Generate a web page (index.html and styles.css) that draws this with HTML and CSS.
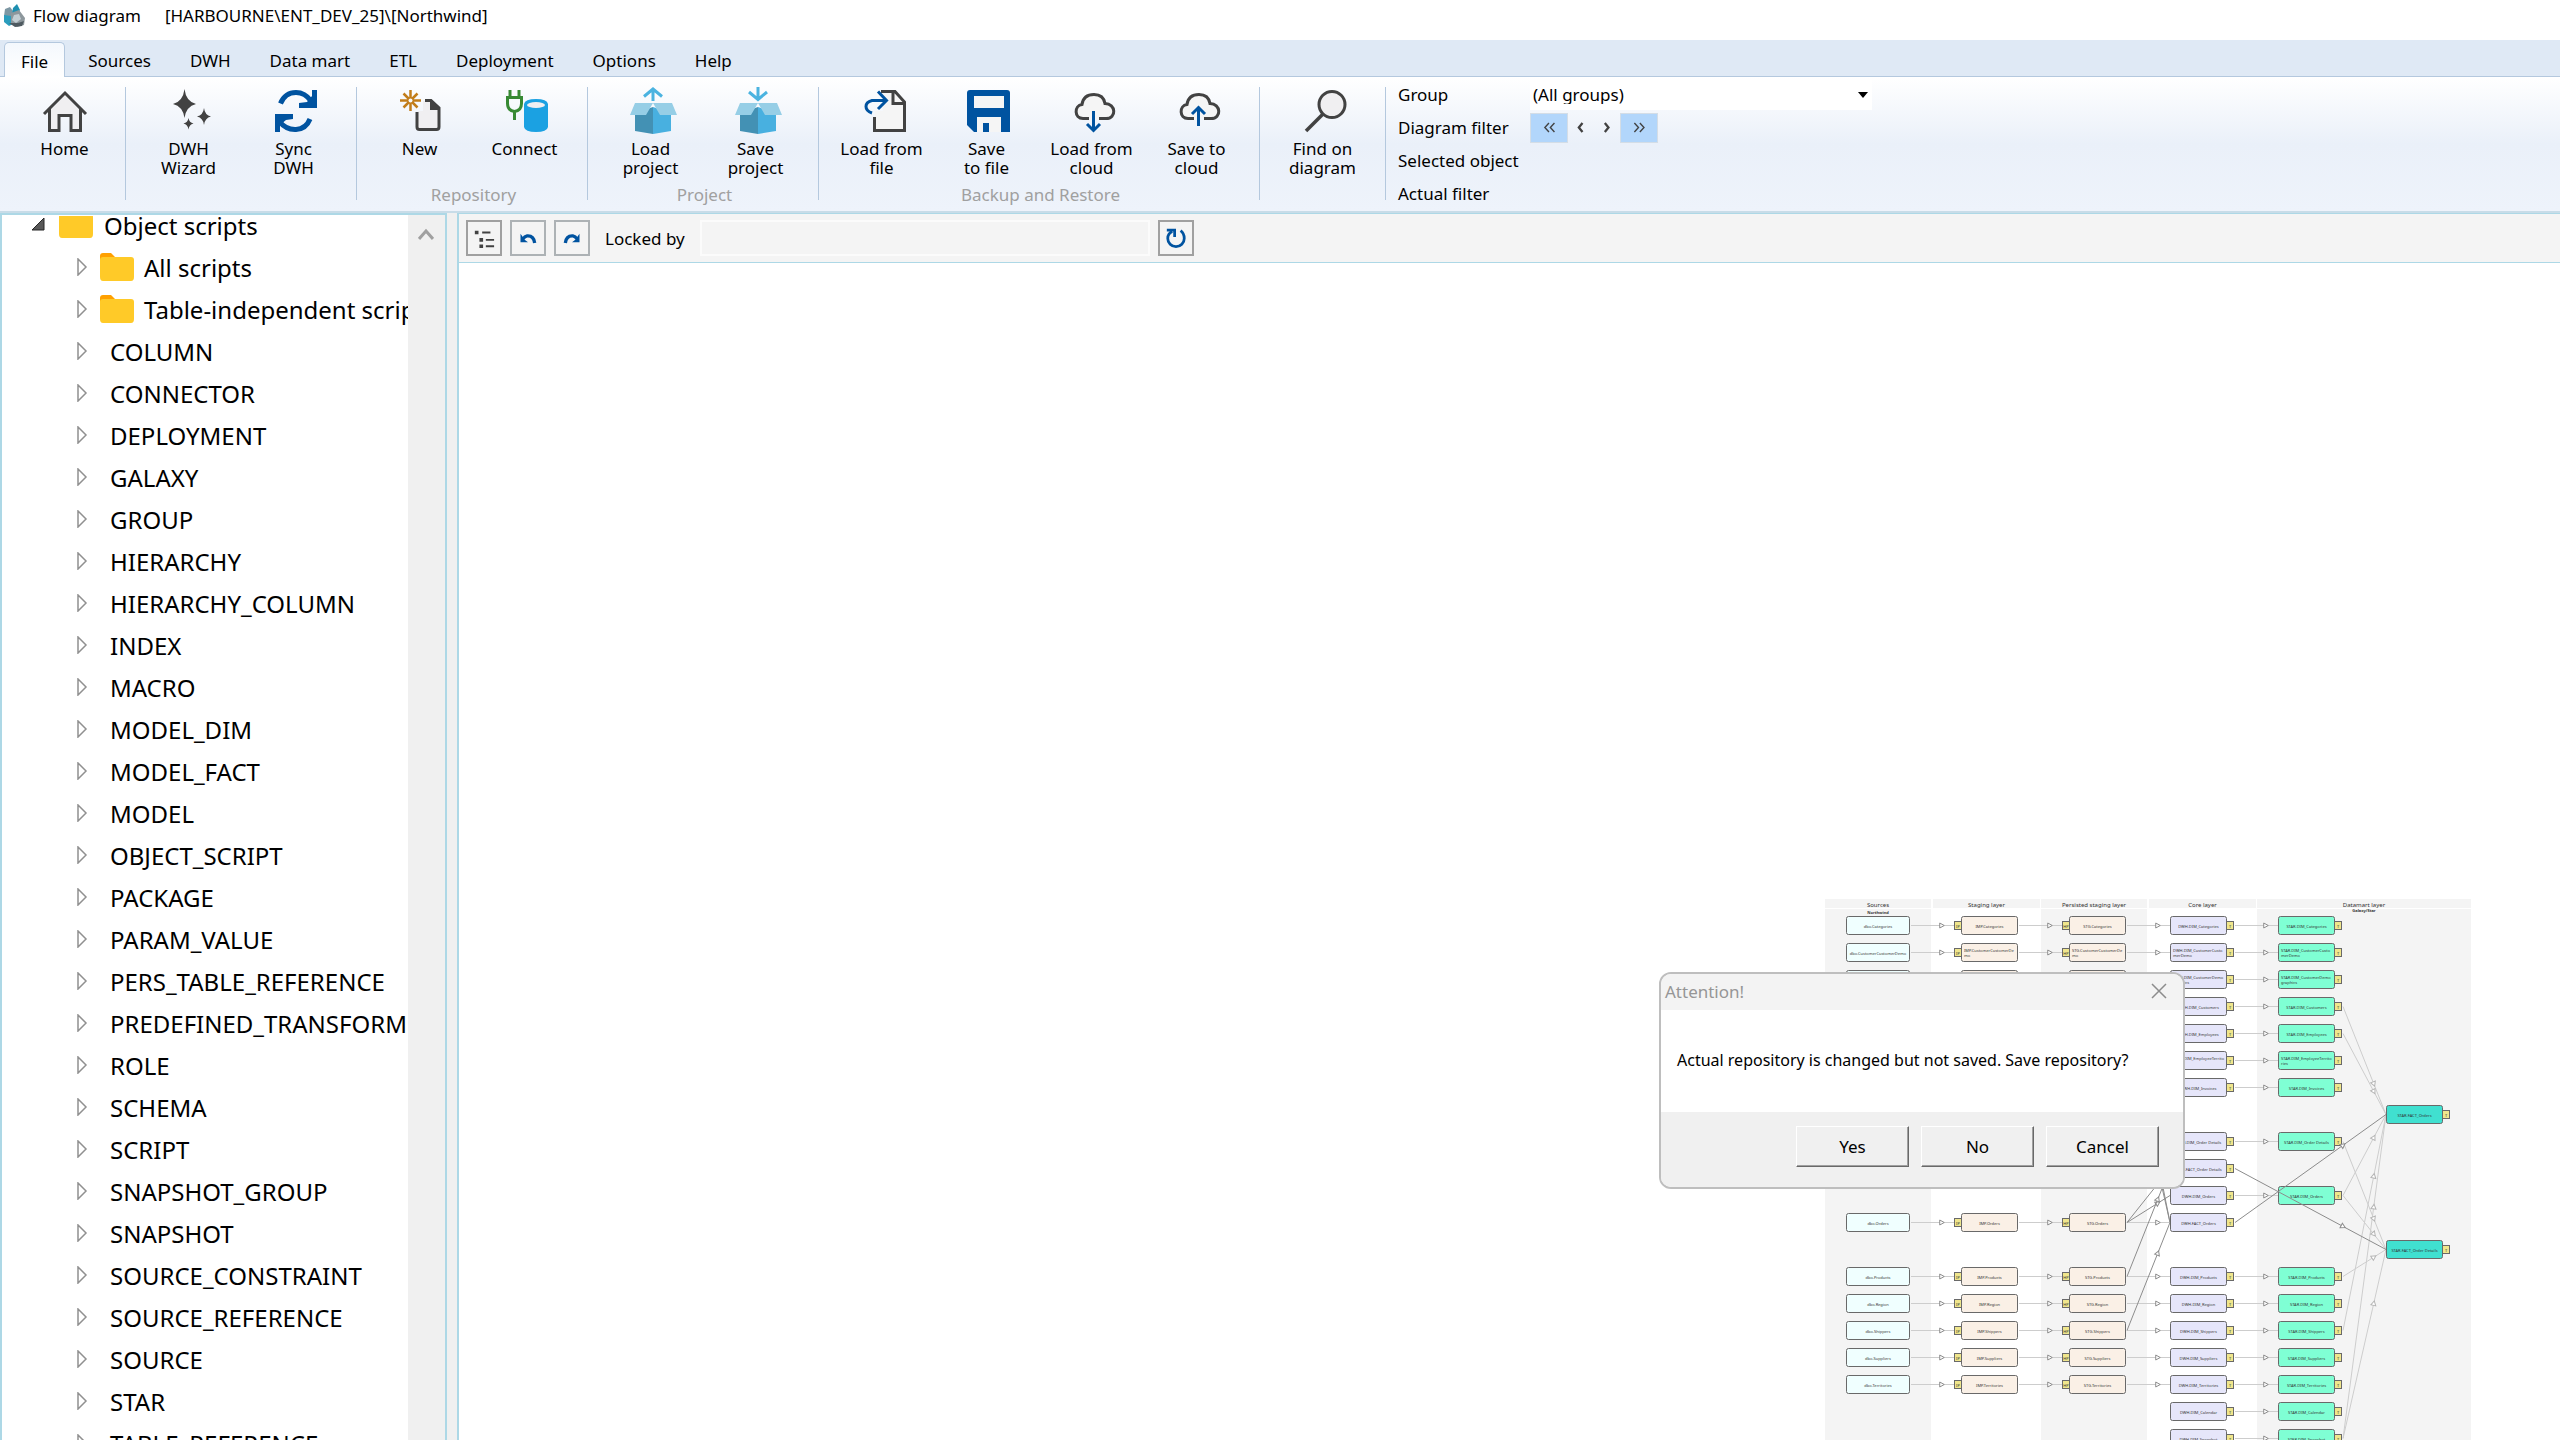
FILE: index.html
```html
<!DOCTYPE html>
<html lang="en">
<head>
<meta charset="utf-8">
<title>Flow diagram</title>
<link rel="stylesheet" href="styles.css">
</head>
<body>
<header class="titlebar">
  <svg class="app-icon" viewBox="0 0 24 24" aria-hidden="true">
    <path d="M3 6l5-2 3 4-2 6-7-1z" fill="#7d97a3"/>
    <path d="M11 5l4-4 3 6-3 5-5-1z" fill="#1d8fb0"/>
    <path d="M2 12l7 1 2 8-4 2-5-4z" fill="#2b9dbd"/>
    <path d="M9 10l8-3 6 8-1 7-7 2-6-4z" fill="#8d979c"/>
    <path d="M12 12l5-1 2 5-5 4-4-3z" fill="#c3ced3"/>
    <path d="M7 20l9 0 6-2-2 5-7 1z" fill="#4f5a60"/>
  </svg>
  <span>Flow diagram</span>
  <span class="db-path">[HARBOURNE\ENT_DEV_25]\[Northwind]</span>
</header>

<nav class="tabs">
  <button class="tab active">File</button>
  <button class="tab">Sources</button>
  <button class="tab">DWH</button>
  <button class="tab">Data mart</button>
  <button class="tab">ETL</button>
  <button class="tab">Deployment</button>
  <button class="tab">Options</button>
  <button class="tab">Help</button>
</nav>

<section class="ribbon">
  <div class="group home">
    <div class="tools">
      <button class="tool"><svg viewBox="0 0 48 48"><path d="M8 25v19h10V29h12v15h10V25L24 8z" fill="#f0eff1"/><path d="M3 27L24 6l21 21M8.500 22v21.500h9.500V28.500h12v15h9.500V22" fill="none" stroke="#424242" stroke-width="3"/></svg>Home</button>
    </div>
  </div>
  <div class="group">
    <div class="tools">
      <button class="tool"><svg viewBox="0 0 48 48" fill="#424242"><path d="M19.500 2q1.500 12.500 11.500 15q-10 2.500-11.500 14q-1.500-11.500-11.500-14q10-2.500 11.500-15zM39 21q.8 7 7 8.500q-6.200 1.500-7 8.500q-.8-7-7-8.500q6.200-1.500 7-8.500zM23.500 31q.7 4.500 5 5.500q-4.300 1-5 6q-.7-5-5-6q4.300-1 5-5.500z"/></svg>DWH<br>Wizard</button>
      <button class="tool"><svg viewBox="0 0 48 48"><path d="M10.500 16.500Q15 5.500 26 5.500Q35 5.500 41 14M9 34Q16 43 26 42.500Q36 42 40 32" fill="none" stroke="#0053a0" stroke-width="5"/><path d="M47 3v18H29v-5l8-1 5-6V3zM5 45V27h18v5l-7 1-6 5v7z" fill="#0053a0"/></svg>Sync<br>DWH</button>
    </div>
  </div>
  <div class="group">
    <div class="tools">
      <button class="tool"><svg viewBox="0 0 48 48"><path d="M22 24h5V14h9l7 7v20H22z" fill="#f0eff1"/><path d="M14.500 3v21M4 13.500h21M7.500 6.500l14 14M21.500 6.500l-14 14" stroke="#c27d1a" stroke-width="2.500"/><circle cx="14.500" cy="13.500" r="2" fill="#f7f9fc"/><path d="M21 25v15q0 2.500 2.500 2.500h17q2.500 0 2.500-2.500V21L35 13.500h-6" fill="none" stroke="#424242" stroke-width="3"/><path d="M34 12l10 9v2H34z" fill="#424242"/></svg>New</button>
      <button class="tool"><svg viewBox="0 0 48 48"><path d="M9 3v8M18 3v8M5 10.500h17M6.500 10.500v6q0 7 7 8q7-1 7-8v-6M13.500 24v9" fill="none" stroke="#388a34" stroke-width="3"/><path d="M23 17q1-5 12-5t12 5v23q-1 5-12 5t-12-5z" fill="#1ba1e2"/><ellipse cx="35" cy="18" rx="9" ry="3" fill="#f0eff1"/></svg>Connect</button>
    </div>
    <span class="group-name">Repository</span>
  </div>
  <div class="group">
    <div class="tools">
      <button class="tool"><svg viewBox="0 0 48 48"><path d="M26 14V2M17 9.500L26 2l9 7.500" fill="none" stroke="#4ab3e0" stroke-width="3"/><path d="M8 26l18-6v27L8 44z" fill="#4391b4"/><path d="M44 26l-18-6v27l18-3z" fill="#48b0e0"/><path d="M8 16h18l-7 12H3zM26 16h19l5 12H33z" fill="#96cee6"/></svg>Load<br>project</button>
      <button class="tool"><svg viewBox="0 0 48 48"><path d="M26 0v12M17 5l9 7.500L35 5" fill="none" stroke="#4ab3e0" stroke-width="3"/><path d="M8 26l18-6v27L8 44z" fill="#4391b4"/><path d="M44 26l-18-6v27l18-3z" fill="#48b0e0"/><path d="M8 16h18l-7 12H3zM26 16h19l5 12H33z" fill="#96cee6"/></svg>Save<br>project</button>
    </div>
    <span class="group-name">Project</span>
  </div>
  <div class="group">
    <div class="tools">
      <button class="tool"><svg viewBox="0 0 48 48"><path d="M24 4h13l10 11v29H17V24h8z" fill="#f5f5f5"/><path d="M23 4.500h14L46.500 15v28.500h-30V30M35 4v12.500h11" fill="none" stroke="#424242" stroke-width="3"/><path d="M14 26q-6-2-6-6.500t6-6h13M20 4.500l8.500 9L20 22" fill="none" stroke="#0053a0" stroke-width="3"/></svg>Load from<br>file</button>
      <button class="tool"><svg viewBox="0 0 48 48"><path d="M4 6q0-3 3-3h37q3 0 3 3v39H11l-7-7z" fill="#0053a0"/><path d="M11 9h30v12H11zM14 30h24v15H26v-9h-6v9h-6z" fill="#f5f5f5"/></svg>Save<br>to file</button>
      <button class="tool"><svg viewBox="0 0 48 48"><path d="M21 31.500h-6c-9 0-9-13-1-14c1-7 5-10 12-10c6 0 10 3 11 9c11 0 12 15 1 15h-7" fill="#f5f5f5" stroke="#424242" stroke-width="3"/><path d="M25.500 24v18M19 37l6.500 6.500L32 37" fill="none" stroke="#0053a0" stroke-width="3"/></svg>Load from<br>cloud</button>
      <button class="tool"><svg viewBox="0 0 48 48"><path d="M21 31.500h-6c-9 0-9-13-1-14c1-7 5-10 12-10c6 0 10 3 11 9c11 0 12 15 1 15h-7" fill="#f5f5f5" stroke="#424242" stroke-width="3"/><path d="M25.500 39V21M19 27l6.500-6.500L32 27" fill="none" stroke="#0053a0" stroke-width="3"/></svg>Save to<br>cloud</button>
    </div>
    <span class="group-name">Backup and Restore</span>
  </div>
  <div class="group">
    <div class="tools">
      <button class="tool"><svg viewBox="0 0 48 48"><circle cx="33" cy="17.500" r="13" fill="#f0eff1" stroke="#424242" stroke-width="3"/><path d="M24 27L7 44" stroke="#424242" stroke-width="3.500"/></svg>Find on<br>diagram</button>
    </div>
  </div>
  <div class="filters">
    <label for="group">Group</label>
    <div class="select-wrap">
      <select id="group"><option>(All groups)</option></select>
      <svg viewBox="0 0 10 6" aria-hidden="true"><path d="M0 0h10L5 6z" fill="#000"/></svg>
    </div>
    <span>Diagram filter</span>
    <div class="pager">
      <button class="wide" aria-label="First"><svg viewBox="0 0 14 12"><path d="M6.500 1L2 6l4.500 5M12.500 1L8 6l4.500 5"/></svg></button>
      <button class="step bold" aria-label="Previous"><svg viewBox="0 0 8 12"><path d="M6 1L2 6l4 5"/></svg></button>
      <button class="step bold" aria-label="Next"><svg viewBox="0 0 8 12"><path d="M2 1l4 5-4 5"/></svg></button>
      <button class="wide" aria-label="Last"><svg viewBox="0 0 14 12"><path d="M1.500 1L6 6l-4.500 5M7.500 1L12 6l-4.500 5"/></svg></button>
    </div>
    <span>Selected object</span><span></span>
    <span>Actual filter</span><span></span>
  </div>
</section>

<main class="workspace">
  <aside class="explorer">
    <ul class="tree" id="tree"></ul>
    <div class="scrollbar"><svg viewBox="0 0 16 12" aria-hidden="true"><path d="M1 11l7-8 7 8" fill="none" stroke="#a0a0a0" stroke-width="3"/></svg></div>
  </aside>
  <section class="editor">
    <div class="toolbar">
      <button class="icon-btn dark" aria-label="Outline"><svg viewBox="0 0 24 24"><path d="M2 4h4v4H2zM7 12h4v4H7zM7 19h4v4H7z" fill="#424242"/><path d="M10 6h9M14 14h9M14 21h9" stroke="#424242" stroke-width="2"/></svg></button>
      <button class="icon-btn small" aria-label="Undo"><svg viewBox="0 0 24 24"><path d="M20 18q-1-9-9-8.500q-3 .5-5 3.500" fill="none" stroke="#0053a0" stroke-width="4"/><path d="M3 7v10h9l-4-3-2-3z" fill="#0053a0"/></svg></button>
      <button class="icon-btn small" aria-label="Redo"><svg viewBox="0 0 24 24"><path d="M4 18q1-9 9-8.500q3 .5 5 3.500" fill="none" stroke="#0053a0" stroke-width="4"/><path d="M21 7v10h-9l4-3 2-3z" fill="#0053a0"/></svg></button>
      <label for="locked">Locked by</label>
      <input id="locked" type="text" readonly>
      <button class="icon-btn dark" aria-label="Refresh"><svg viewBox="0 0 24 24"><path d="M17 4q4 3 4 8.500a9 9 0 0 1-18 0Q3 7 8 5" fill="none" stroke="#0053a0" stroke-width="3"/><path d="M2 2h10v9H9V5H2z" fill="#0053a0"/></svg></button>
    </div>
    <div class="canvas">
      <svg class="diagram" id="diagram" width="648" height="560"></svg>
    </div>
  </section>
</main>

<div class="dialog" role="dialog" aria-labelledby="dialog-title">
  <div class="dialog-head">
    <span id="dialog-title">Attention!</span>
    <button class="close" aria-label="Close"><svg viewBox="0 0 16 16"><path d="M1 1l14 14M15 1L1 15" stroke="#8c8c8c" stroke-width="1.500"/></svg></button>
  </div>
  <p class="dialog-text">Actual repository is changed but not saved. Save repository?</p>
  <div class="dialog-actions">
    <button>Yes</button>
    <button>No</button>
    <button>Cancel</button>
  </div>
</div>
<script src="app.js"></script>
</body>
</html>
```
FILE: styles.css
```css
* { box-sizing: border-box; }
body {
  margin: 0;
  height: 100vh;
  overflow: hidden;
  display: flex;
  flex-direction: column;
  background: #fff;
  color: #000;
  font: 17px/19px "Noto Sans", "Open Sans", sans-serif;
}
button, select, input { font: inherit; color: inherit; }
button { border: 0; padding: 0; background: none; }

.titlebar {
  display: flex;
  align-items: center;
  height: 40px;
  padding: 0 2px 10px;
}
.app-icon { width: 24px; height: 24px; margin-right: 7px; }
.db-path { margin-left: 24px; }

.tabs {
  display: flex;
  height: 37px;
  padding: 2px 4px 0;
  background: #dfe9f5;
  border-bottom: 1px solid #b4c8de;
}
.tab { height: 35px; padding: 2px 20px 0 19px; }
.tab.active {
  padding: 2px 16px 0;
  margin-right: 4px;
  border: 1px solid #b4c8de;
  border-bottom: 0;
  border-radius: 5px 5px 0 0;
  background: linear-gradient(#f4f8fd, #fff);
}

.ribbon {
  display: flex;
  flex: none;
  height: 136px;
  padding: 10px 0 11px;
  background: linear-gradient(#fff, #eaf0f9 50%, #eef3fb);
  border-bottom: 2px solid #c8dce8;
}
.group {
  display: flex;
  flex-direction: column;
  align-items: center;
  justify-content: space-between;
  padding: 0 10px;
  border-right: 1px solid #b4c8de;
}
.group.home { padding: 0 8px 0 12px; }
.tools { display: flex; }
.tool { width: 105px; display: block; text-align: center; }
.tool svg { display: block; width: 48px; height: 48px; margin: 0 auto 4px; overflow: visible; }
.group-name { color: #a0a0a0; margin: 0 0 -4px 3px; }
.filters {
  display: grid;
  grid-template-columns: 132px 342px;
  grid-template-rows: repeat(4, 33px);
  align-items: center;
  align-content: start;
  margin: -9px 0 -8px 12px;
}
.select-wrap { display: flex; align-items: center; height: 30px; background: #fff; padding-right: 4px; }
.select-wrap select { flex: 1; height: 28px; border: 0; padding: 0 3px; background: none; appearance: none; }
.select-wrap svg { width: 10px; height: 6px; }
.pager { display: flex; align-items: center; }
.pager button { height: 30px; display: flex; align-items: center; justify-content: center; }
.pager .wide { width: 38px; background: #b2d6fb; border: 1px solid #d4dde6; }
.pager .step { width: 26px; }
.pager svg { height: 11px; fill: none; stroke: #424242; stroke-width: 1.500; }
.pager .bold svg { stroke-width: 2.500; }

.workspace { flex: 1; min-height: 0; display: flex; gap: 10px; background: #f0f0f0; }
.explorer {
  display: flex;
  flex: none;
  width: 447px;
  border: 2px solid #add8e6;
  border-bottom: 0;
  background: #fff;
  overflow: hidden;
}
.tree {
  flex: 1;
  min-width: 0;
  margin: 1px 0 0;
  padding: 0;
  list-style: none;
  overflow: hidden;
  font-size: 24px;
  line-height: 42px;
}
.tree li { display: flex; align-items: center; height: 42px; padding-left: 74px; white-space: nowrap; }
.tree li.root { height: 31px; padding-left: 29px; align-items: flex-end; }
.tree svg { flex: none; }
.tree .arrow { width: 14px; height: 18px; margin: 0 20px 2px 0; }
.tree .folder { width: 34px; height: 28px; margin: 0 10px 3px -10px; }
.tree .root .arrow { margin: 0 14px 14px 0; }
.tree .root .folder { margin: 0 11px 9px 0; }
.scrollbar { width: 37px; background: #f0f0f0; padding: 13px 10px; }
.scrollbar svg { width: 16px; height: 12px; display: block; }

.editor {
  flex: 1;
  min-width: 0;
  display: flex;
  flex-direction: column;
  border-left: 2px solid #add8e6;
  border-top: 1px solid #add8e6;
  background: #fff;
}
.toolbar {
  display: flex;
  align-items: center;
  gap: 8px;
  height: 49px;
  padding-left: 7px;
  background: #f4f4f4;
  border-bottom: 1px solid #add8e6;
}
.icon-btn {
  width: 36px;
  height: 36px;
  border: 2px solid #adb2b5;
  display: flex;
  align-items: center;
  justify-content: center;
}
.icon-btn.dark { border-color: #a0a0a0; }
.icon-btn svg { width: 22px; height: 22px; }
.icon-btn.small svg { width: 20px; height: 20px; }
.toolbar label { margin: 0 7px; }
.toolbar input { width: 450px; height: 36px; border: 2px solid #fbfbfb; background: #f4f4f4; }

.canvas { position: relative; flex: 1; overflow: hidden; }
.diagram { position: absolute; left: 1366px; top: 636px; font-size: 4px; fill: #333; }
.diagram .heading { font-size: 6px; text-anchor: middle; }
.diagram .subheading { font-weight: bold; text-anchor: middle; }
.diagram .centered { text-anchor: middle; }
.diagram .link { stroke: #cdcdcd; }
.diagram .link.strong { stroke: #8c8c8c; }
.diagram .tip { fill: #fff; stroke: #8c8c8c; stroke-width: 1; }
.diagram .tip.soft { stroke: #b4b4b4; }
.diagram .box { stroke: #696969; }
.diagram .badge { fill: #f0e68c; stroke: #696969; }

.dialog {
  position: absolute;
  left: 1659px;
  top: 972px;
  width: 526px;
  border: 2px solid #bebebe;
  border-radius: 12px;
  background: #fff;
  overflow: hidden;
}
.dialog-head {
  display: flex;
  align-items: center;
  justify-content: space-between;
  height: 36px;
  padding: 0 16px 2px 4px;
  background: #f3f3f3;
  color: #969696;
}
.close, .close svg { display: block; width: 16px; height: 16px; }
.dialog-text { margin: 0; padding: 41px 16px 42px; font-size: 16px; white-space: nowrap; }
.dialog-actions {
  display: flex;
  justify-content: flex-end;
  gap: 12px;
  height: 75px;
  padding: 14px 24px 0 0;
  background: #f0f0f0;
}
.dialog-actions button {
  width: 113px;
  height: 41px;
  background: #f0f0f0;
  border: 1px solid;
  border-color: #fff #696969 #696969 #fff;
  box-shadow: inset -1px -1px #a0a0a0;
}
```
FILE: app.js
```javascript
// Object tree
const folder = '<svg class="folder" viewBox="0 0 34 28"><path d="M0 3q0-3 3-3h8l4 4v6H0z" fill="#ffa000"/><path d="M0 7q0-3 3-3h28q3 0 3 3v17q0 4-3 4H3q-3 0-3-4z" fill="#ffca28"/></svg>';
const closed = '<svg class="arrow" viewBox="0 0 14 18"><path d="M2 1v16l8-8z" fill="#fff" stroke="#909090" stroke-width="1.500"/></svg>';
const opened = '<svg class="arrow" viewBox="0 0 14 14"><path d="M1 13L13 1v12z" fill="#595959" stroke="#262626"/></svg>';
const names = ["COLUMN", "CONNECTOR", "DEPLOYMENT", "GALAXY", "GROUP", "HIERARCHY", "HIERARCHY_COLUMN",
  "INDEX", "MACRO", "MODEL_DIM", "MODEL_FACT", "MODEL", "OBJECT_SCRIPT", "PACKAGE", "PARAM_VALUE",
  "PERS_TABLE_REFERENCE", "PREDEFINED_TRANSFORM", "ROLE", "SCHEMA", "SCRIPT", "SNAPSHOT_GROUP", "SNAPSHOT",
  "SOURCE_CONSTRAINT", "SOURCE_REFERENCE", "SOURCE", "STAR", "TABLE_REFERENCE"];
document.getElementById("tree").innerHTML =
  `<li class="root">${opened}${folder}Object scripts</li>` +
  ["All scripts", "Table-independent scripts"].map(n => `<li>${closed}${folder}${n}</li>`).join("") +
  names.map(n => `<li>${closed}${n}</li>`).join("");

// Flow diagram: one row every 27 units, layers side by side
const ROW = 27, TOP = 17.5, H = 18;
const mid = r => TOP + r * ROW + 9;
let back = "", links = "", boxes = "";

const layers = [
  ["Sources", 0, 106, true], ["Staging layer", 108, 107, false], ["Persisted staging layer", 216, 106, true],
  ["Core layer", 324, 107, false], ["Datamart layer", 432, 214, true]
];
for (const [name, x, w, shaded] of layers) {
  back += `<rect x="${x}" y="0" width="${w}" height="9" fill="#f4f4f4"/>`;
  if (shaded) back += `<rect x="${x}" y="10" width="${w}" height="560" fill="#f4f4f4"/>`;
  back += `<text class="heading" x="${x + w / 2}" y="8">${name}</text>`;
}
back += `<text class="subheading" x="53" y="15">Northwind</text><text class="subheading" x="539" y="13">Galaxy/Star</text>`;

function link(x1, y1, x2, y2, kind, tip) {
  const t = 0.715, x = x1 + (x2 - x1) * t, y = y1 + (y2 - y1) * t;
  const a = Math.atan2(y2 - y1, x2 - x1) * 180 / Math.PI;
  links += `<line class="link ${kind}" x1="${x1}" y1="${y1}" x2="${x2}" y2="${y2}"/>`;
  links += `<path class="tip ${tip}" d="M-2-2.500L2.500 0L-2 2.500z" transform="translate(${x} ${y}) rotate(${a})"/>`;
}
function box(x, w, row, fill, text) {
  const y = TOP + row * ROW, lines = text.split("|");
  boxes += `<rect class="box" x="${x + .5}" y="${y}" width="${w - 1}" height="${H}" rx="2" fill="${fill}"/>`;
  if (lines.length > 1) {
    lines.forEach((l, i) => boxes += `<text x="${x + 3}" y="${y + 8 + i * 5}">${l}</text>`);
  } else {
    boxes += `<text class="centered" x="${x + w / 2}" y="${y + 11}">${text}</text>`;
  }
}
function badge(x, row, text) {
  const y = mid(row) - 4;
  boxes += `<rect class="badge" x="${x + .5}" y="${y}" width="7" height="8"/><text class="centered" x="${x + 4}" y="${y + 6}">${text}</text>`;
}

const staged = [[0, "Categories"], [1, "CustomerCustomerDemo", "CustomerCustomerDe|mo"], [2, ""], [11, "Orders"],
  [13, "Products"], [14, "Region"], [15, "Shippers"], [16, "Suppliers"], [17, "Territories"]];
for (const [r, name, wrapped] of staged) {
  const y = mid(r);
  box(21, 64, r, "#f0ffff", name && "dbo." + name);
  box(136, 57, r, "#faf0e6", name && "IMP." + (wrapped || name));
  box(244, 57, r, "#faf0e6", name && "STG." + (wrapped || name));
  badge(129, r, "IP");
  badge(237, r, "HP");
  link(86, y, 129, y, "", "");
  link(194, y, 237, y, "", "");
  link(302, y, 345, y, "", "");
}

const dims = [[0, "Categories"], [1, "CustomerCusto|merDemo"], [2, "CustomerDemo|graphics"], [3, "Customers"],
  [4, "Employees"], [5, "EmployeeTerrito|ries"], [6, "Invoices"], [8, "Order Details"], [10, "Orders"],
  [13, "Products"], [14, "Region"], [15, "Shippers"], [16, "Suppliers"], [17, "Territories"],
  [18, "Calendar"], [19, "Snapshot"]];
for (const [r, name] of dims) {
  box(345, 57, r, "#e6e6fa", "DWH.DIM_" + name);
  box(453, 57, r, "#7fffd4", "STAR.DIM_" + name);
  badge(401, r, "T");
  badge(509, r, "T");
  link(410, mid(r), 453, mid(r), "", "");
}
box(345, 57, 9, "#e6e6fa", "DWH.FACT_Order Details");
box(345, 57, 11, "#e6e6fa", "DWH.FACT_Orders");
badge(401, 9, "T");
badge(401, 11, "T");
box(561, 57, 7, "#40e0d0", "STAR.FACT_Orders");
box(561, 57, 12, "#40e0d0", "STAR.FACT_Order Details");
badge(617, 7, "T");
badge(617, 12, "T");

for (const [from, to] of [[11, 9], [11, 10], [13, 9], [15, 11], [3, 11], [4, 11]])
  link(302, mid(from), 345, mid(to), "strong", "");
for (const [from, to] of [[3, 7], [4, 7], [10, 7], [15, 7], [19, 7], [8, 12], [10, 12], [13, 12], [19, 12]])
  link(518, mid(from), 561, mid(to), "", "soft");

// The links between facts cross over the dimension boxes
const under = links;
links = "";
link(410, mid(9), 561, mid(12), "strong", "");
link(410, mid(11), 561, mid(7), "strong", "");
document.getElementById("diagram").innerHTML = back + under + boxes + links;
```
